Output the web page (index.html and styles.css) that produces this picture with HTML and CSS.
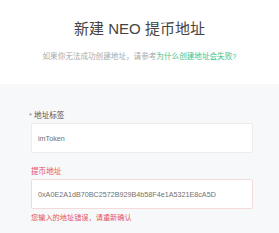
FILE: index.html
```html
<!DOCTYPE html>
<html lang="zh">
<head>
<meta charset="utf-8">
<link rel="stylesheet" href="styles.css">
</head>
<body>
<header class="head">
  <h1 class="title">新建 NEO 提币地址</h1>
  <p class="sub">如果你无法成功创建地址，请参考<a class="link">为什么创建地址会失败?</a></p>
</header>
<main class="form">
  <div class="field">
    <label class="label"><span class="star">*</span> 地址标签</label>
    <div class="input">imToken</div>
  </div>
  <div class="field error">
    <label class="label">提币地址</label>
    <div class="input">0xA0E2A1dB70BC2572B929B4b58F4e1A5321E8cA5D</div>
    <p class="msg">您输入的地址错误，请重新确认</p>
  </div>
</main>
</body>
</html>
```
FILE: styles.css
```css
html, body {
  margin: 0;
  padding: 0;
  background: #f7f8fa;
  font-family: "Liberation Sans", "Noto Sans CJK SC", sans-serif;
}
.head {
  background: #fff;
  height: 84px;
  box-sizing: border-box;
  padding-top: 20px;
  text-align: center;
}
.title {
  margin: 0;
  font-size: 15px;
  line-height: 18px;
  font-weight: normal;
  color: #444;
}
.sub {
  margin: 14px 0 0;
  font-size: 7.6px;
  line-height: 10px;
  color: #aaa;
}
.link {
  color: #3fc28a;
}
.form {
  padding: 27px 26px 0 31px;
}
.field {
  display: flex;
  flex-direction: column;
  margin-bottom: 14px;
}
.label {
  font-size: 7.6px;
  line-height: 10px;
  color: #555;
  margin-left: -2px;
}
.star {
  color: #888;
}
.input {
  margin-top: 2px;
  height: 30px;
  box-sizing: border-box;
  background: #fff;
  border: 1px solid #ececec;
  border-radius: 2px;
  padding-left: 6px;
  display: flex;
  align-items: center;
  font-size: 7.2px;
  color: #707070;
}
.error .label {
  color: #e5535a;
  margin-left: 0;
}
.error .input {
  border-color: #f5dada;
}
.msg {
  margin: 4px 0 0;
  font-size: 7.2px;
  line-height: 10px;
  color: #e5535a;
}
```
